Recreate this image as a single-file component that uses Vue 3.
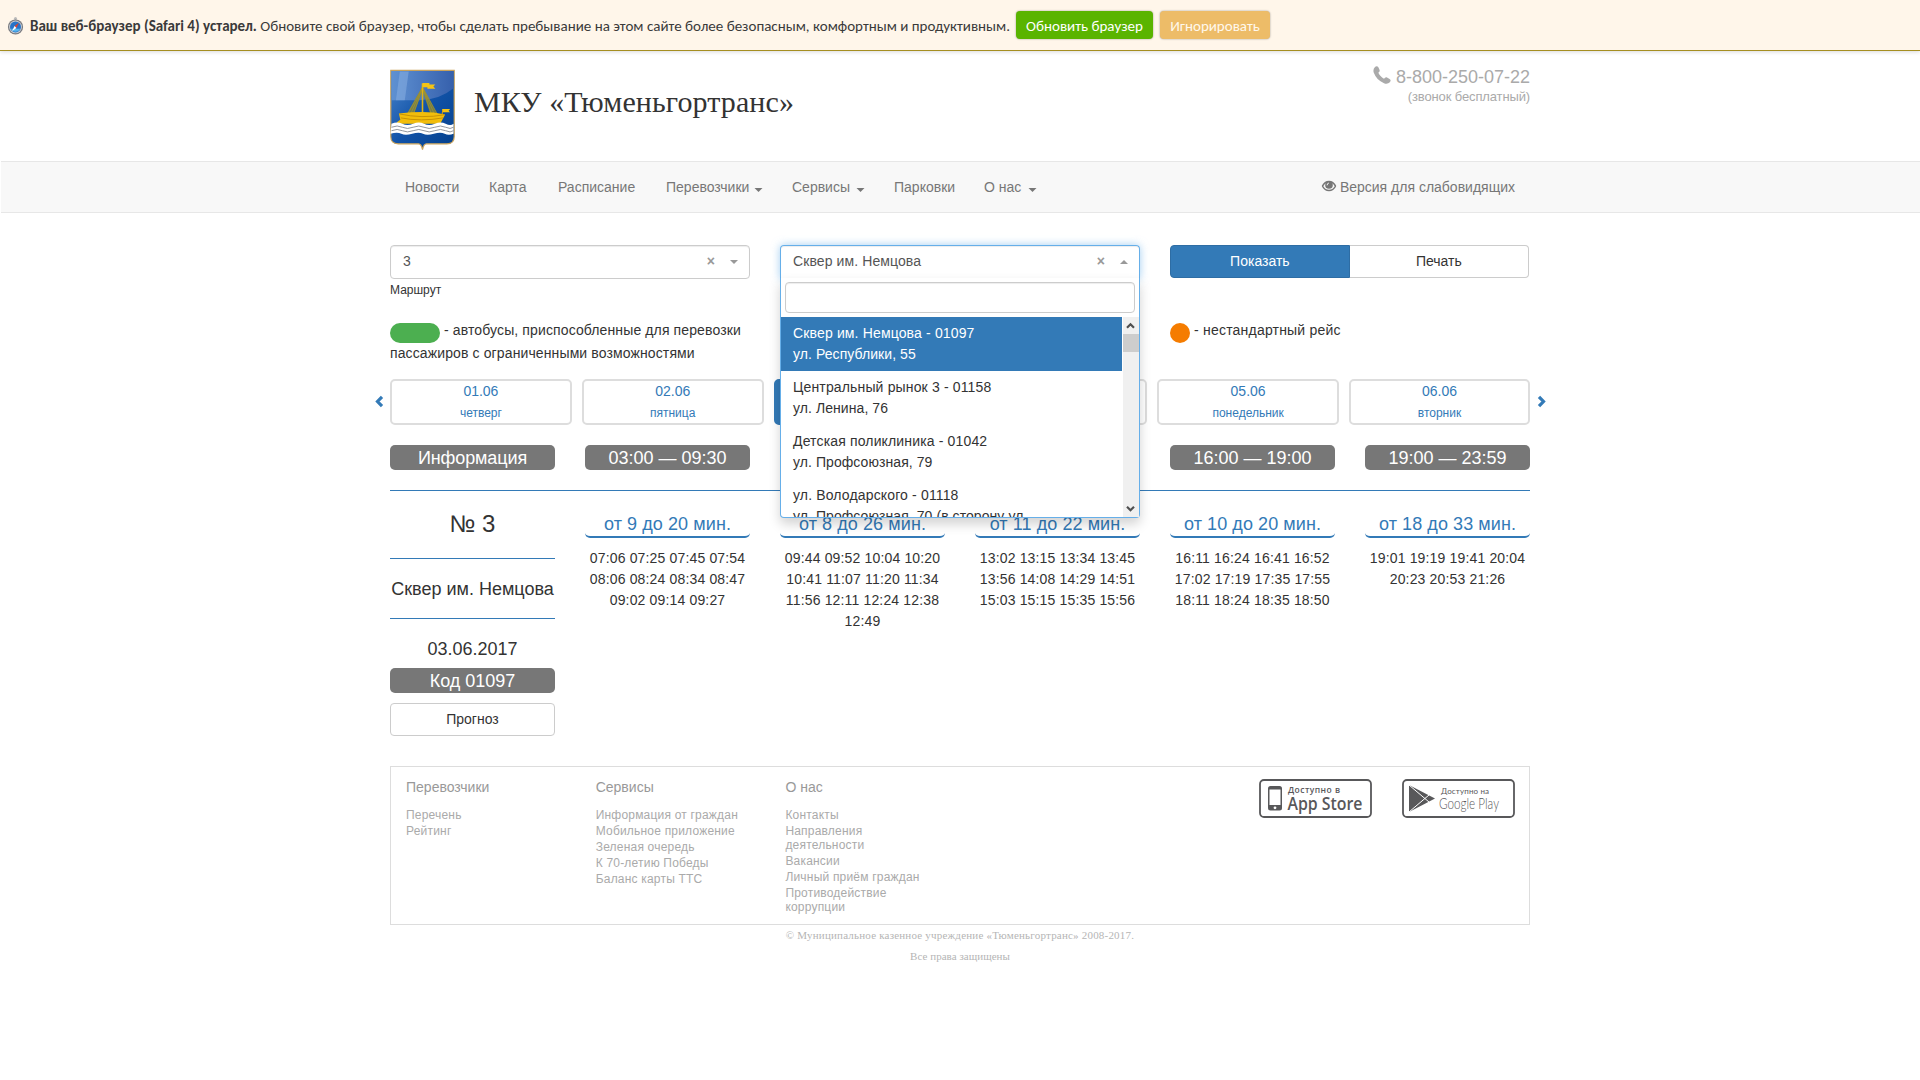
<script setup>
const nav = [
  { label: 'Новости', width: 84 },
  { label: 'Карта', width: 69 },
  { label: 'Расписание', width: 108 },
  { label: 'Перевозчики', width: 126, menu: true },
  { label: 'Сервисы', width: 102, menu: true },
  { label: 'Парковки', width: 90 },
  { label: 'О нас', width: 82, menu: true },
]

const stops = [
  { name: 'Сквер им. Немцова - 01097', street: 'ул. Республики, 55', active: true },
  { name: 'Центральный рынок 3 - 01158', street: 'ул. Ленина, 76' },
  { name: 'Детская поликлиника - 01042', street: 'ул. Профсоюзная, 79' },
  { name: 'ул. Володарского - 01118', street: 'ул. Профсоюзная, 70 (в сторону ул.' },
]

const days = [
  { id: 1, date: '01.06', name: 'четверг' },
  { id: 2, date: '02.06', name: 'пятница' },
  { id: 3, active: true },
  { id: 4 },
  { id: 5, date: '05.06', name: 'понедельник' },
  { id: 6, date: '06.06', name: 'вторник' },
]

const periods = [
  {
    range: '03:00 — 09:30',
    interval: 'от 9 до 20 мин.',
    rows: ['07:06 07:25 07:45 07:54', '08:06 08:24 08:34 08:47', '09:02 09:14 09:27'],
  },
  {
    interval: 'от 8 до 26 мин.',
    rows: ['09:44 09:52 10:04 10:20', '10:41 11:07 11:20 11:34', '11:56 12:11 12:24 12:38', '12:49'],
  },
  {
    interval: 'от 11 до 22 мин.',
    rows: ['13:02 13:15 13:34 13:45', '13:56 14:08 14:29 14:51', '15:03 15:15 15:35 15:56'],
  },
  {
    range: '16:00 — 19:00',
    interval: 'от 10 до 20 мин.',
    rows: ['16:11 16:24 16:41 16:52', '17:02 17:19 17:35 17:55', '18:11 18:24 18:35 18:50'],
  },
  {
    range: '19:00 — 23:59',
    interval: 'от 18 до 33 мин.',
    rows: ['19:01 19:19 19:41 20:04', '20:23 20:53 21:26'],
  },
]

const footer = [
  { title: 'Перевозчики', links: ['Перечень', 'Рейтинг'] },
  {
    title: 'Сервисы',
    links: ['Информация от граждан', 'Мобильное приложение', 'Зеленая очередь', 'К 70-летию Победы', 'Баланс карты ТТС'],
  },
  {
    title: 'О нас',
    links: ['Контакты', 'Направления деятельности', 'Вакансии', 'Личный приём граждан', 'Противодействие коррупции'],
  },
]
</script>

<template>
  <div class="page">
    <div class="notice">
      <svg class="compass" width="17" height="20" viewBox="0 0 18 20">
        <circle cx="9" cy="2" r="1.6" fill="#bbb" />
        <circle cx="9" cy="11" r="8" fill="#77797f" />
        <circle cx="9" cy="11" r="6.8" fill="#c9ccd2" />
        <circle cx="9" cy="11" r="5.8" fill="#2873c8" />
        <path d="M4 13a5.6 5.6 0 0 0 10 0z" fill="#54b4ee" />
        <path d="M12.6 6.6 10 12 8 10z" fill="#e0402a" />
        <path d="M5.4 15.4 8 10l2 2z" fill="#fff" />
      </svg>
      <span class="notice-text"><b>Ваш веб-браузер (Safari 4) устарел.</b> <span>Обновите свой браузер, чтобы сделать пребывание на этом сайте более безопасным, комфортным и продуктивным.</span></span>
      <a class="nbtn green">Обновить браузер</a>
      <a class="nbtn sand">Игнорировать</a>
    </div>

    <header class="header wrap">
      <svg class="crest" width="65" height="83" viewBox="0 0 66 83">
        <defs>
          <linearGradient id="sky" x1="0" y1="0" x2="1" y2="1">
            <stop offset="0" stop-color="#4a86cc" />
            <stop offset=".5" stop-color="#1253a8" />
            <stop offset="1" stop-color="#04408c" />
          </linearGradient>
          <linearGradient id="gloss" x1="0" y1="0" x2="1" y2="0">
            <stop offset="0" stop-color="#5f91d2" />
            <stop offset="1" stop-color="#3660ac" />
          </linearGradient>
        </defs>
        <path d="M.8.8h64.400v67q0 7.500-7.500 7.500H37q-2.800 0-4 6-1.200-6-4-6H8.300Q.8 75.300.8 67.800z" fill="url(#sky)" stroke="#c9a25a" stroke-width="1.200" />
        <path d="M1.500 1.500h63V19Q50 31 30 31H1.500z" fill="url(#gloss)" />
        <path d="M10 2h9L15 31H6z" fill="#84abdf" opacity=".6" />
        <path d="M33 17 17 45h7L33 22zM33 17l15 28h-7L33 22z" fill="#8c8a30" opacity=".8" />
        <path d="M33 18 18 45M33 18l-12 27M33 18l-9 27M33 18l9 27M33 18l12 27M33 18l15 27" fill="none" stroke="#a8942a" stroke-width=".7" />
        <path d="M32.200 14h1.600v31h-1.600z" fill="#e0b416" />
        <path d="M33 13.500h7v1.500h6l-2 2.200 2 2.200h-8v-1.500h-5zM53 40h8l-1.500 1.700L61 43.300h-8z" fill="#f5c414" />
        <path d="M53.500 41l-1 8" stroke="#d9a80c" stroke-width="1" />
        <path d="M9 44.500q13-1.500 24-1.500t23 2.500l-5 9.500H7q-1-1.500 3.500-4z" fill="#f2bd0b" />
        <path d="M9.500 45q23 5 46 .8M11 49q20 4 43 0" fill="none" stroke="#c18d05" stroke-width=".9" />
        <path d="M1.500 55q6-2.500 11 0t11 0 11 0 11 0 11 0 8 0v10q-5 2-9 0t-11 0-11 0-11 0-11 0-11 0z" fill="#fff" />
        <path d="M1.500 58.500q6-2.500 11 0t11 0 11 0 11 0 11 0 8 0M1.500 62q6-2.500 11 0t11 0 11 0 11 0 11 0 8 0" fill="none" stroke="#858991" stroke-width=".9" />
      </svg>
      <h1>МКУ «Тюменьгортранс»</h1>
      <div class="phone">
        <div class="number">
          <svg width="18" height="18" viewBox="0 0 18 18"><path d="M1.800 1.200C3-.2 4.600-.1 5.500 1.500l1 2.300c.5 1.300 0 2-1.200 3C6.500 9.400 8.300 11.200 11 12.700c1-1.300 1.800-1.800 3-1.200l2.600 1.400c1.300.8 1.400 2.200.2 3.400-1.400 1.500-3.600 1.900-5.800.9C6 15 2.500 11.500.8 6.800.1 4.600.4 2.700 1.800 1.200z" fill="#aaa" /></svg>
          <span>8-800-250-07-22</span>
        </div>
        <div class="free">(звонок бесплатный)</div>
      </div>
    </header>

    <nav class="navbar">
      <div class="wrap navrow">
        <a v-for="n in nav" :key="n.label" :style="{ width: n.width + 'px' }">{{ n.label }}<i v-if="n.menu" class="caret"></i></a>
        <a class="vision">
          <svg width="15" height="12" viewBox="0 0 15 12">
            <path d="M.1 6Q2.800.7 7.500.7T14.900 6Q12.200 11.300 7.500 11.300T.1 6z" fill="#777" />
            <path d="M1.800 6.200Q2.800 4.300 4.300 3.300 3.600 4.300 3.700 5.500 4 8.700 7.500 8.700t3.800-3.200q.1-1.200-.6-2.200 1.500 1 2.500 2.900-2 3.600-5.700 3.600T1.800 6.200z" fill="#f8f8f8" />
            <path d="M7.400 3q-1.800.3-1.800 2.300" fill="none" stroke="#f8f8f8" stroke-width="1" />
          </svg>
          <span>Версия для слабовидящих</span>
        </a>
      </div>
    </nav>

    <main class="wrap">
      <div class="filters">
        <div class="field">
          <div class="select"><span>3</span><b class="clear">×</b><i class="tri"></i></div>
          <div class="hint">Маршрут</div>
        </div>
        <div class="field">
          <div class="select open"><span>Сквер им. Немцова</span><b class="clear">×</b><i class="tri up"></i></div>
          <div class="dropdown">
            <div class="search"></div>
            <div class="results">
              <div class="options">
                <div v-for="s in stops" :key="s.name" class="option" :class="{ active: s.active }">
                  <div class="name">{{ s.name }}</div>
                  <div class="street">{{ s.street }}</div>
                </div>
              </div>
              <div class="scroll">
                <svg width="15" height="17" viewBox="0 0 15 17"><path d="M4 10.800 7.500 7.300 11 10.800" fill="none" stroke="#505050" stroke-width="2.200" /></svg>
                <div class="thumb"></div>
                <svg class="down" width="15" height="17" viewBox="0 0 15 17"><path d="M4 6.700 7.500 10.200 11 6.700" fill="none" stroke="#505050" stroke-width="2.200" /></svg>
              </div>
            </div>
          </div>
        </div>
        <div class="actions"><button class="primary">Показать</button><button>Печать</button></div>
      </div>

      <div class="legend">
        <p><i class="mark bus"></i> - автобусы, приспособленные для перевозки<br>пассажиров с ограниченными возможностями</p>
        <p class="special"><i class="mark odd"></i> - нестандартный рейс</p>
      </div>

      <div class="days">
        <svg class="arrow left" width="9" height="13" viewBox="0 0 9 13"><path d="M7 1.800 2.500 6.500 7 11.200" fill="none" stroke="#337ab7" stroke-width="3.200" /></svg>
        <a v-for="d in days" :key="d.id" class="day" :class="{ active: d.active }">
          <template v-if="d.date"><span>{{ d.date }}</span><small>{{ d.name }}</small></template>
        </a>
        <svg class="arrow right" width="9" height="13" viewBox="0 0 9 13"><path d="M2 1.800 6.500 6.500 2 11.200" fill="none" stroke="#337ab7" stroke-width="3.200" /></svg>
      </div>

      <div class="columns heads">
        <div class="pill caption">Информация</div>
        <div v-for="p in periods" :key="p.interval" class="pill">{{ p.range }}</div>
      </div>

      <div class="columns table">
        <div class="info">
          <div class="route">№ 3</div>
          <div class="stop">Сквер им. Немцова</div>
          <div class="date">03.06.2017</div>
          <div class="pill">Код 01097</div>
          <button>Прогноз</button>
        </div>
        <div v-for="p in periods" :key="p.interval" class="period">
          <div class="interval">{{ p.interval }}</div>
          <div v-for="r in p.rows" :key="r" class="times">{{ r }}</div>
        </div>
      </div>

      <footer>
        <div v-for="f in footer" :key="f.title" class="fcol">
          <h4>{{ f.title }}</h4>
          <a v-for="l in f.links" :key="l">{{ l }}</a>
        </div>
        <div class="stores">
          <svg width="113" height="39" viewBox="0 0 113 39">
            <rect x="1" y="1" width="111" height="37" rx="4" fill="#fff" stroke="#58585a" stroke-width="1.800" />
            <rect x="9" y="7" width="14" height="24.500" rx="2.500" fill="#58585a" />
            <path d="M10.500 10.500h11v15.500h-11z" fill="#fff" />
            <circle cx="16" cy="28.800" r="1.400" fill="#fff" />
            <text x="29" y="13.500" class="s1" textLength="52">Доступно в</text>
            <text x="28.500" y="31" class="s2" textLength="75" lengthAdjust="spacingAndGlyphs">App Store</text>
          </svg>
          <svg width="113" height="39" viewBox="0 0 113 39">
            <rect x="1" y="1" width="111" height="37" rx="4" fill="#fff" stroke="#58585a" stroke-width="1.800" />
            <path d="M7 6v27l26-13.500z" fill="#58585a" />
            <path d="M7 6l20 17M7 33l20-17" stroke="#fff" stroke-width="1" />
            <text x="39" y="14.500" class="g1" textLength="48">Доступно на</text>
            <text x="37" y="29.500" class="g2" textLength="60" lengthAdjust="spacingAndGlyphs">Google Play</text>
          </svg>
        </div>
      </footer>
      <div class="copy wide">© Муниципальное казенное учреждение «Тюменьгортранс» 2008-2017.</div>
      <div class="copy">Все права защищены</div>
    </main>
  </div>
</template>

<style>
body { background: #fff; }
</style>

<style scoped>
* { box-sizing: border-box; }
.page { height: 1080px; overflow: hidden; font: 14px/20px Arial, "Liberation Sans", sans-serif; color: #333; }
.wrap { width: 1140px; margin: 0 auto; }

.notice { display: flex; align-items: center; height: 51px; padding-left: 7px; background: #fff6ea; border-bottom: 1px solid #a58e20; box-shadow: 0 1px 4px rgba(0, 0, 0, .15); font: 15px/26px "Carlito", "Open Sans", sans-serif; color: #3a3a3a; }
.compass { margin-top: 2px; }
.notice-text { width: 986px; margin: 2px 0 0 6px; white-space: nowrap; }
.nbtn { height: 28px; padding-top: 1px; border-radius: 4px; color: #fff; line-height: 28px; text-align: center; box-shadow: 0 0 2px rgba(0, 0, 0, .4); }
.green { width: 137px; background: #5ab400; }
.sand { width: 110px; margin-left: 7px; background: #edbc68; color: #fff8ec; }

.header { display: flex; height: 110px; padding-top: 18px; }
h1 { margin: 16px 0 0 19px; font: 30px/33px "Liberation Serif", serif; letter-spacing: .1px; color: #333; }
.phone { margin-left: auto; margin-top: -3px; text-align: right; color: #aaa; }
.number { display: flex; gap: 5px; height: 22px; font-size: 18px; line-height: 22px; }
.free { font-size: 13px; line-height: 17px; letter-spacing: -.13px; }

.navbar { height: 52px; margin-left: 1px; background: #f8f8f8; border: 1px solid #e7e7e7; border-width: 1px 0; }
.navrow { display: flex; transform: translateX(-.5px); }
.navrow a { display: flex; padding: 15px; color: #777; line-height: 20px; white-space: nowrap; }
.caret { margin: 11px 0 0 auto; width: 0; height: 0; border: 4px solid transparent; border-top-color: #777; border-bottom: 0; }
.navrow .vision { margin-left: auto; }
.vision svg { margin: 3px 3px 0 0; }

.filters { display: flex; gap: 30px; height: 57px; margin-top: 32px; }
.field { position: relative; width: 360px; }
.select { display: flex; align-items: center; height: 34px; padding: 0 11px 2px 12px; border: 1px solid #ccc; border-radius: 4px; color: #555; line-height: 20px; letter-spacing: .1px; box-shadow: inset 0 1px 1px rgba(0, 0, 0, .075); }
.select.open { border-color: #66afe9; border-bottom-color: transparent; border-radius: 4px 4px 0 0; box-shadow: inset 0 1px 1px rgba(0, 0, 0, .075), 0 0 8px rgba(102, 175, 233, .6); }
.clear { margin-left: auto; color: #999; }
.tri { margin: 2px 0 0 15px; border: 4px solid transparent; border-top-color: #999; border-bottom: 0; }
.tri.up { border: 4px solid transparent; border-bottom-color: #999; border-top: 0; }
.hint { font-size: 12px; line-height: 22px; }
.dropdown { position: absolute; left: 0; top: 33px; z-index: 5; width: 360px; height: 240px; padding-top: 4px; background: #fff; border: 1px solid #66afe9; border-top: 0; border-radius: 0 0 4px 4px; box-shadow: 0 6px 12px rgba(0, 0, 0, .175); }
.search { height: 31px; margin: 0 4px 4px; border: 1px solid #ccc; border-radius: 4px; box-shadow: inset 0 1px 1px rgba(0, 0, 0, .075); }
.results { display: flex; height: 200px; overflow: hidden; }
.options { width: 341px; }
.option { height: 54px; padding: 6px 12px; line-height: 21px; white-space: nowrap; }
.name { letter-spacing: .15px; }
.street { letter-spacing: .07px; }
.option.active { background: #337ab7; color: #fff; }
.scroll { display: flex; flex-direction: column; width: 16px; margin-left: 1px; background: #f0f0f0; }
.thumb { height: 18px; background: #cdcdcd; }
.down { margin-top: auto; }
.actions { display: flex; width: 359px; margin-right: 1px; }
button { width: 100%; height: 33px; padding: 0 0 2px; background: #fff; border: 1px solid #ccc; border-radius: 4px; color: #333; font: inherit; }
.actions button { border-radius: 0 4px 4px 0; border-left: 0; }
.actions .primary { background: #337ab7; border: 1px solid #2e6da4; border-radius: 4px 0 0 4px; color: #fff; }

.legend { display: flex; justify-content: space-between; height: 46px; margin-top: 17px; line-height: 23px; letter-spacing: .12px; }
.legend p { width: 360px; margin: 0; white-space: nowrap; }
.legend .special { letter-spacing: .2px; }
.mark { display: inline-block; height: 20px; border-radius: 10px; vertical-align: top; margin-top: 4px; margin-bottom: -4px; }
.bus { width: 50px; background: #4caf50; }
.odd { width: 20px; background: #f57c00; }

.days { position: relative; display: flex; gap: 10px; margin-top: 14px; }
.day { display: flex; flex: none; flex-direction: column; width: 181.800px; height: 46px; border: 2px solid #ddd; border-radius: 5px; color: #337ab7; text-align: center; line-height: 21px; }
.day:last-of-type { width: 181px; }
.day small { font-size: 12px; line-height: 22px; }
.day.active { background: #337ab7; border-color: #337ab7; color: #fff; }
.arrow { position: absolute; top: 16px; }
.left { left: -15px; }
.right { right: -16px; }

.columns { display: flex; gap: 30px; }
.pill { width: 165px; height: 25px; background: #777; border-radius: 5px; color: #fff; font-size: 18px; line-height: 26px; text-align: center; }
.caption { letter-spacing: -.1px; }
.heads { margin-top: 20px; }
.table { height: 276px; margin-top: 20px; border-top: 1px solid #337ab7; }
.info { width: 165px; text-align: center; white-space: nowrap; }
.route { height: 68px; border-bottom: 1px solid #337ab7; font-size: 24px; line-height: 66px; }
.stop { height: 60px; border-bottom: 1px solid #337ab7; font-size: 18px; line-height: 60px; }
.date { height: 49px; font-size: 18px; line-height: 60px; }
.info button { margin-top: 10px; }
.period { width: 165px; text-align: center; white-space: nowrap; }
.interval { height: 25px; margin: 22px 0 10px; border-bottom: 2px solid #337ab7; border-radius: 5px; color: #337ab7; font-size: 18px; line-height: 23px; letter-spacing: .08px; }
.times { line-height: 21px; letter-spacing: .16px; }

footer { display: flex; height: 159px; padding: 0 15px; border: 1px solid #ddd; color: #aaa; font-size: 12px; line-height: 14px; }
.fcol { width: 189.700px; padding-top: 10px; padding-right: 50px; }
.fcol h4 { margin: 0 0 10px; color: #999; font: 14px/21px Arial, "Liberation Sans", sans-serif; }
.fcol a { display: block; margin-bottom: 2px; letter-spacing: .2px; }
.fcol:nth-child(2) a, .fcol:nth-child(3) a:nth-of-type(4) { white-space: nowrap; }
.stores { display: flex; gap: 30px; margin: 12px -1px 0 auto; }
.s1 { font: 600 8.500px "Open Sans", sans-serif; fill: #58585a; }
.s2 { font: 600 18px "Open Sans", sans-serif; fill: #58585a; }
.g1 { font: 8px Lato, "Open Sans", sans-serif; fill: #58585a; }
.g2 { font: 300 15px Lato, sans-serif; fill: #58585a; }
.copy { color: #b5b5b5; font: 11px/21px "Liberation Serif", serif; letter-spacing: .04px; text-align: center; }
.wide { letter-spacing: .2px; }
</style>
